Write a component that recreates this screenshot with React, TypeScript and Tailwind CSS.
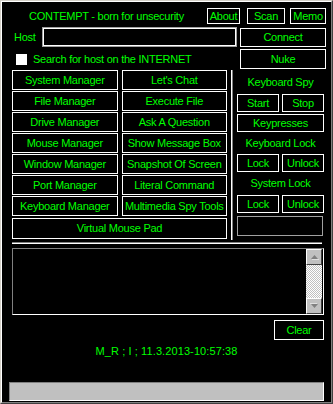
import React from 'react';

const font = "font-['Liberation_Sans',Arial,sans-serif] text-[11px] tracking-[-0.25px] text-[#00ff00]";

function Btn({ children, className = '' }: { children: React.ReactNode; className?: string }) {
  return (
    <div className={`flex items-center justify-center border border-white bg-black leading-none whitespace-nowrap ${className}`}>
      {children}
    </div>
  );
}

const leftButtons = [
  ['System Manager', "Let's Chat"],
  ['File Manager', 'Execute File'],
  ['Drive Manager', 'Ask A Question'],
  ['Mouse Manager', 'Show Message Box'],
  ['Window Manager', 'Snapshot Of Screen'],
  ['Port Manager', 'Literal Command'],
  ['Keyboard Manager', 'Multimedia Spy Tools'],
];

function Arrow({ up }: { up: boolean }) {
  return (
    <svg width="9" height="6" viewBox="0 0 9 6" className={up ? '' : 'rotate-180'}>
      <path d="M1 5 L4.5 1 L8 5 Z" fill="#808080" />
      <path d="M2 6 L8 6 L8.5 5.5" stroke="#ffffff" strokeWidth="1" fill="none" />
    </svg>
  );
}

export default function App() {
  return (
    <div className={`w-[333px] h-[404px] bg-black border border-t-[#d4d0c8] border-l-[#d4d0c8] border-r-[#404040] border-b-[#404040] ${font}`}>
      <div className="w-full h-full border border-t-white border-l-white border-r-[#808080] border-b-[#808080] flex flex-col">
        {/* title row */}
        <div className="flex h-[16px] mt-[6px] items-center">
          <span className="ml-[27px] w-[178px] leading-none">CONTEMPT - born for unsecurity</span>
          <Btn className="w-[33px] h-[16px]">About</Btn>
          <Btn className="ml-[7px] w-[38px] h-[16px]">Scan</Btn>
          <Btn className="ml-[5px] w-[36px] h-[16px]">Memo</Btn>
        </div>

        {/* host row */}
        <div className="flex h-[20px] mt-[3px] items-center">
          <span className="ml-[12px] w-[28px] leading-none">Host</span>
          <div className="w-[195px] h-[20px] border border-[#a0a0a0] shadow-[inset_0_0_0_1px_#ffffff] bg-black" />
          <Btn className="ml-[3px] w-[86px] h-[19px]">Connect</Btn>
        </div>

        {/* search row */}
        <div className="flex h-[20px] mt-[2px] items-center">
          <div className="ml-[14px] w-[11px] h-[11px] bg-white" />
          <span className="ml-[6px] leading-none">Search for host on the INTERNET</span>
          <Btn className="ml-auto mr-[5px] w-[86px] h-[20px]">Nuke</Btn>
        </div>

        {/* main section */}
        <div className="flex h-[170px] mt-[1px]">
          <div className="ml-[10px] w-[215px] flex flex-col">
            <div className="grid grid-cols-2 gap-x-[4px] gap-y-[1px]">
              {leftButtons.map(([a, b]) => (
                <React.Fragment key={a}>
                  <Btn className="h-[20px]">{a}</Btn>
                  <Btn className="h-[20px]">{b}</Btn>
                </React.Fragment>
              ))}
            </div>
            <Btn className="mt-[2px] h-[21px] w-[215px]">Virtual Mouse Pad</Btn>
          </div>

          <div className="ml-[4px] w-[2px] h-[170px] flex">
            <div className="w-px bg-white" />
            <div className="w-px bg-[#808080]" />
          </div>

          <div className="ml-[4px] w-[87px] flex flex-col">
            <div className="h-[24px] flex items-center justify-center leading-none">Keyboard Spy</div>
            <div className="flex gap-[3px]">
              <Btn className="w-[42px] h-[18px]">Start</Btn>
              <Btn className="w-[42px] h-[18px]">Stop</Btn>
            </div>
            <Btn className="mt-[2px] w-[87px] h-[18px]">Keypresses</Btn>
            <div className="h-[22px] flex items-center justify-center leading-none">Keyboard Lock</div>
            <div className="flex gap-[3px]">
              <Btn className="w-[42px] h-[18px]">Lock</Btn>
              <Btn className="w-[42px] h-[18px]">Unlock</Btn>
            </div>
            <div className="h-[23px] flex items-center justify-center leading-none">System Lock</div>
            <div className="flex gap-[3px]">
              <Btn className="w-[42px] h-[18px]">Lock</Btn>
              <Btn className="w-[42px] h-[18px]">Unlock</Btn>
            </div>
            <div className="mt-[3px] w-[86px] h-[20px] border border-[#a0a0a0]" />
          </div>
        </div>

        {/* horizontal separator */}
        <div className="ml-[10px] mt-[2px] w-[310px] h-[2px] flex flex-col">
          <div className="h-px bg-[#808080]" />
          <div className="h-px bg-white" />
        </div>

        {/* output box */}
        <div className="ml-[10px] mt-[4px] w-[312px] h-[67px] border border-t-[#808080] border-l-[#808080] border-r-white border-b-white flex">
          <div className="flex-1" />
          <div className="w-[16px] flex flex-col mr-px">
            <div className="h-[16px] bg-[#c0c0c0] border border-t-white border-l-white border-r-[#404040] border-b-[#404040] flex items-center justify-center">
              <Arrow up />
            </div>
            <div className="flex-1 bg-[repeating-conic-gradient(#c0c0c0_0%_25%,#ffffff_0%_50%)] bg-[length:2px_2px]" />
            <div className="h-[16px] bg-[#c0c0c0] border border-t-white border-l-white border-r-[#404040] border-b-[#404040] flex items-center justify-center">
              <Arrow up={false} />
            </div>
          </div>
        </div>

        {/* clear */}
        <div className="flex mt-[5px]">
          <Btn className="ml-auto mr-[7px] w-[50px] h-[20px]">Clear</Btn>
        </div>

        {/* status */}
        <div className="mt-[5px] h-[12px] flex items-center justify-center leading-none tracking-[0.1px]">
          M_R ; I ; 11.3.2013-10:57:38
        </div>

        {/* bottom bar */}
        <div className="ml-[7px] mt-[25px] w-[315px] h-[19px] bg-[#c0c0c0] border border-t-[#808080] border-l-[#808080] border-r-white border-b-white" />
      </div>
    </div>
  );
}
